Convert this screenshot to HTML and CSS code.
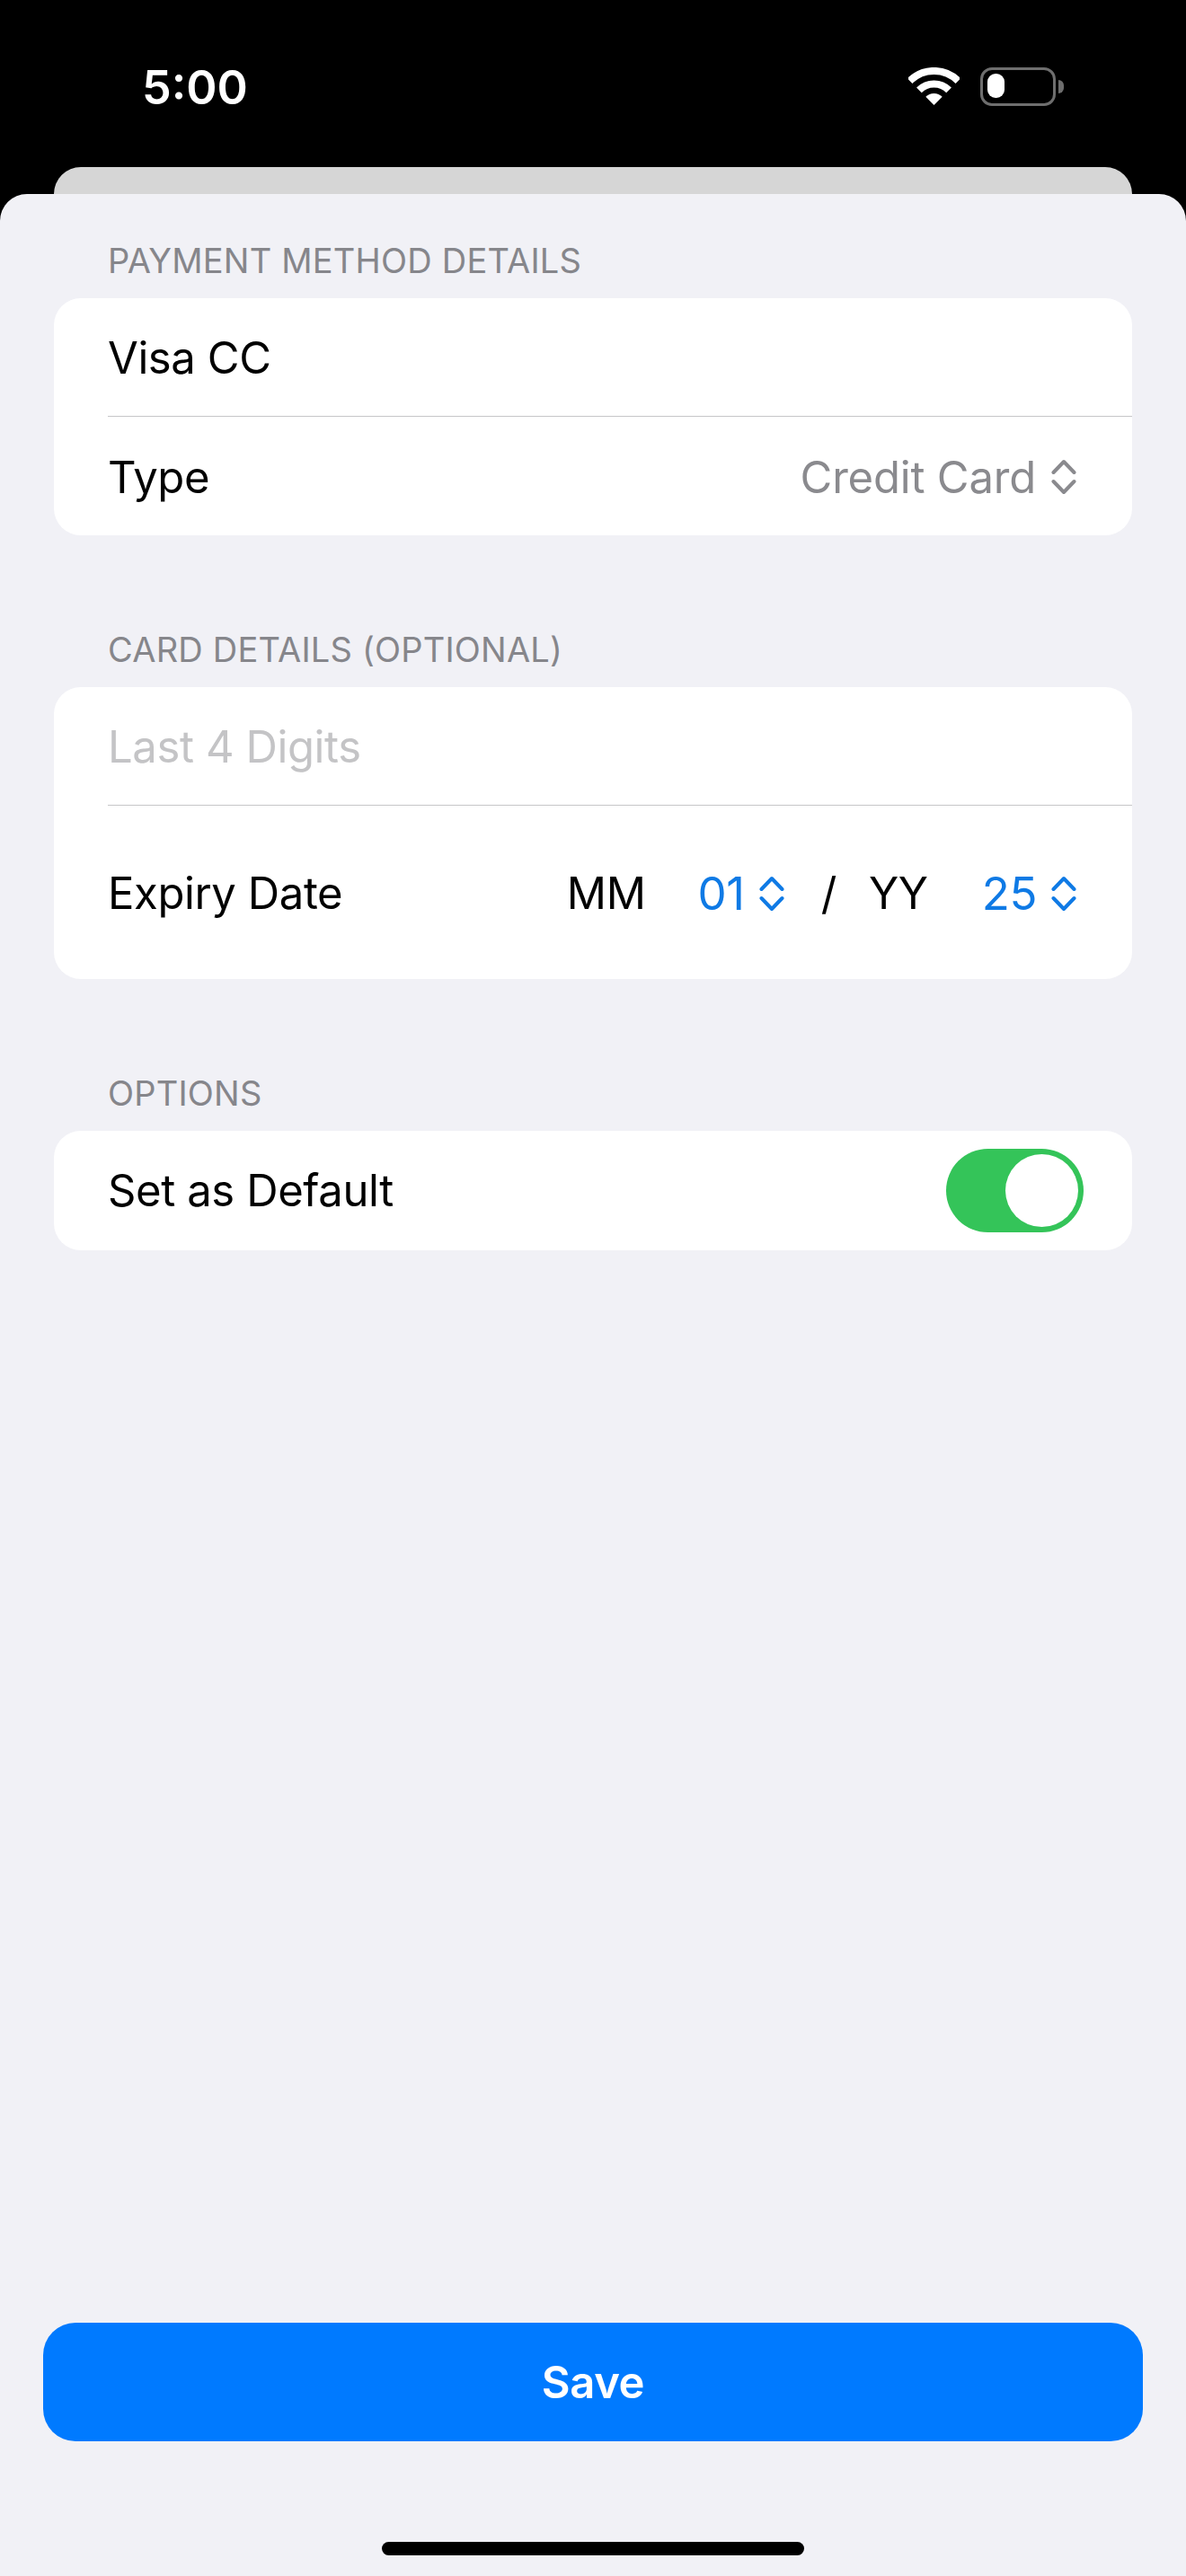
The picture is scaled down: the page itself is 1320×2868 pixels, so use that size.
FILE: index.html
```html
<!DOCTYPE html>
<html lang="en">
<head>
  <meta charset="UTF-8">
  <meta name="viewport" content="width=device-width, initial-scale=1.0">
  <title>Payment Method</title>
  <link rel="stylesheet" href="styles.css">
</head>
<body>
  <svg class="icon-defs" width="0" height="0">
    <symbol id="chevrons" viewBox="0 0 28 40">
      <path d="M2.500 15 14 3l11.500 12M2.500 25 14 37l11.500-12" fill="none" stroke="currentColor" stroke-width="4" stroke-linecap="round" stroke-linejoin="round"/>
    </symbol>
  </svg>

  <div class="screen">
    <header class="status-bar">
      <span class="time">5:00</span>
      <div class="status-icons">
        <svg class="wifi" width="57" height="42" viewBox="0 0 57 42">
          <path d="M1.600 15.100a38 38 0 0 1 53.800 0M11.900 25.400a23.500 23.500 0 0 1 33.200 0" fill="none" stroke="#fff" stroke-width="8"/>
          <path d="M28.500 42 19.300 32.800a13 13 0 0 1 18.400 0Z" fill="#fff"/>
        </svg>
        <div class="battery"><div class="battery-fill"></div></div>
        <div class="battery-cap"></div>
      </div>
    </header>

    <div class="back-card"></div>

    <main class="sheet">
      <section class="section">
        <h2 class="section-title">PAYMENT METHOD DETAILS</h2>
        <div class="card">
          <div class="row">Visa CC</div>
          <div class="row">
            <span>Type</span>
            <span class="picker picker-gray">Credit Card <svg class="chevrons"><use href="#chevrons"/></svg></span>
          </div>
        </div>
      </section>

      <section class="section">
        <h2 class="section-title">CARD DETAILS (OPTIONAL)</h2>
        <div class="card">
          <div class="row placeholder">Last 4 Digits</div>
          <div class="row row-tall">
            <span>Expiry Date</span>
            <div class="expiry">
              <span class="expiry-label">MM</span>
              <span class="picker picker-blue picker-month">01 <svg class="chevrons"><use href="#chevrons"/></svg></span>
              <span class="expiry-slash">/</span>
              <span class="expiry-label">YY</span>
              <span class="picker picker-blue picker-year">25 <svg class="chevrons"><use href="#chevrons"/></svg></span>
            </div>
          </div>
        </div>
      </section>

      <section class="section">
        <h2 class="section-title">OPTIONS</h2>
        <div class="card">
          <div class="row row-toggle">
            <span>Set as Default</span>
            <div class="toggle"><div class="toggle-knob"></div></div>
          </div>
        </div>
      </section>

      <button class="save-button" type="button">Save</button>
      <div class="home-indicator"></div>
    </main>
  </div>
</body>
</html>
```

FILE: styles.css
```css
* {
  box-sizing: border-box;
}

body {
  margin: 0;
  background-color: #000;
  color: #000;
  font-family: Inter, "Liberation Sans", sans-serif;
}

.icon-defs {
  position: absolute;
}

.screen {
  display: flex;
  flex-direction: column;
  height: 2868px;
  overflow: hidden;
}

/* status bar */
.status-bar {
  display: flex;
  justify-content: space-between;
  height: 186px;
  padding: 67px 136px 0 158px;
  color: #fff;
}

.time {
  font-size: 52px;
  font-weight: 600;
  line-height: 62px;
}

.status-icons {
  display: flex;
  margin-top: 8px;
}

.wifi {
  margin-right: 23px;
}

.battery {
  width: 84px;
  height: 43px;
  padding: 5px;
  border: 3px solid #6e6e6e;
  border-radius: 13px;
}

.battery-fill {
  width: 19px;
  height: 27px;
  margin: -1px 0 0 0;
  background-color: #fff;
  border-radius: 9px;
}

.battery-cap {
  width: 6px;
  height: 15px;
  margin: 14px 0 0 3px;
  background-color: #6e6e6e;
  border-radius: 0 8px 8px 0;
}

.back-card {
  flex: none;
  height: 60px;
  margin: 0 60px -30px;
  background-color: #d6d6d6;
  border-radius: 30px 30px 0 0;
}

/* sheet */
.sheet {
  position: relative;
  flex: 1;
  display: flex;
  flex-direction: column;
  padding: 50px 60px 0;
  background-color: #f1f1f6;
  border-radius: 30px 30px 0 0;
}

.section {
  margin-bottom: 103px;
}

.section-title {
  margin: 0 0 18px 60px;
  color: #86868b;
  font-size: 38px;
  font-weight: 400;
  letter-spacing: 0.2px;
  line-height: 48px;
}

.card {
  background-color: #fff;
  border-radius: 30px;
}

.row {
  display: flex;
  align-items: center;
  justify-content: space-between;
  height: 132px;
  margin-left: 60px;
  padding: 2px 62px 0 0;
  font-size: 49px;
  letter-spacing: -0.4px;
  border-bottom: 1px solid #c6c6c8;
}

.row:last-child {
  border-bottom: none;
}

.row-tall {
  height: 193px;
}

.row-toggle {
  height: 133px;
  padding: 0 54px 0 0;
}

.placeholder {
  color: #c4c4c6;
}

.picker {
  display: flex;
  align-items: center;
  gap: 16px;
}

.picker-gray {
  color: #8a8a8e;
  gap: 17px;
  letter-spacing: -0.2px;
}

.picker-blue {
  color: #0f7ae5;
  font-size: 51px;
}

.chevrons {
  width: 28px;
  height: 40px;
}

.expiry {
  display: flex;
  align-items: center;
}

.expiry-slash {
  margin: 0 36px 0 41px;
}

.picker-year {
  margin-left: 60px;
}

.picker-month {
  margin-left: 58px;
}

.toggle {
  display: flex;
  justify-content: flex-end;
  align-items: center;
  width: 153px;
  height: 93px;
  padding-right: 6px;
  background-color: #34c459;
  border-radius: 47px;
}

.toggle-knob {
  width: 81px;
  height: 81px;
  background-color: #fff;
  border-radius: 50%;
}

.save-button {
  flex: none;
  height: 132px;
  margin: auto -12px 0;
  color: #fff;
  font-family: inherit;
  font-size: 49px;
  font-weight: 600;
  letter-spacing: -0.4px;
  background-color: #007aff;
  border: none;
  border-radius: 36px;
}

.home-indicator {
  flex: none;
  align-self: center;
  width: 470px;
  height: 15px;
  margin: 112px 0 23px;
  background-color: #000;
  border-radius: 8px;
}
```
